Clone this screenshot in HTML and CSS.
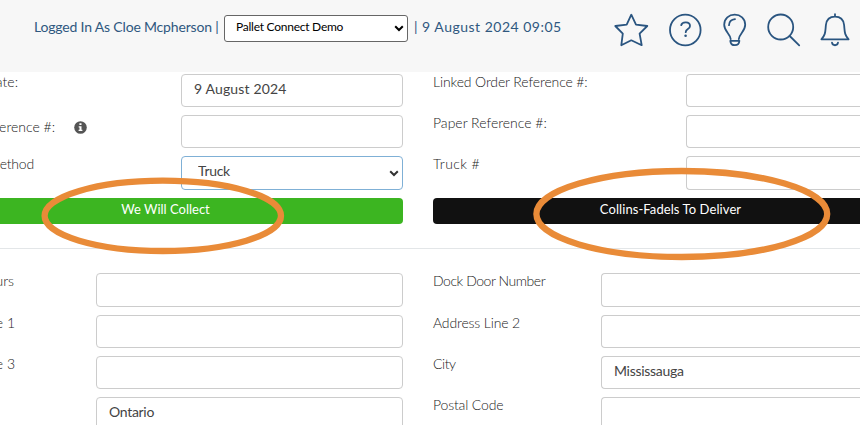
FILE: index.html
```
<!DOCTYPE html>
<html lang="en">
<head>
    <meta charset="UTF-8">
    <meta name="viewport" content="width=device-width, initial-scale=1.0">
    <title>Pallet Connect</title>
    <link rel="stylesheet" href="styles.css">
</head>
<body>

    <header class="topbar">
        <span class="user">Logged In As Cloe Mcpherson |</span>
        <div class="select-wrap site">
            <select class="site-select"><option>Pallet Connect Demo</option></select>
            <svg class="caret" width="10" height="7" viewBox="0 0 10 7"><path d="M1.2 1.2L5 5L8.8 1.2"/></svg>
        </div>
        <span class="clock">| 9 August 2024 09:05</span>
        <nav class="icons">
            <svg width="36" height="34" viewBox="0 0 36 34"><path d="M17.3 1.7L22 11.7L33.3 13L25.6 20.6L27.7 32.2L17.3 27.3L7.3 32.2L8.8 20.6L1.3 13L12.7 11.7Z"/></svg>
            <svg width="34" height="34" viewBox="0 0 34 34"><circle cx="17.3" cy="17" r="15.3"/><path d="M13.2 12.2C14 8.4 22 8.2 22 12.9C22 16.4 17.7 15.6 17.7 19.2"/><circle class="dot" cx="17.6" cy="22.8" r="1.3"/></svg>
            <svg width="27" height="34" viewBox="0 0 27 34"><path d="M10.7 26.2C10.2 20.5 4.2 18.4 4.2 11.8C4.2 5.6 9 1.7 14.7 1.7C20.4 1.7 25.2 5.6 25.2 11.8C25.2 18.4 19.3 20.5 18.8 26.2M9 12.2C9.2 8.8 11.5 6.6 15 6.2M10.3 27.8H19.4C19.2 31 17.6 32.2 14.9 32.2C12.2 32.2 10.6 31 10.3 27.8Z"/></svg>
            <svg width="36" height="34" viewBox="0 0 36 34"><circle cx="15.7" cy="14" r="12.5"/><path d="M24.7 23L34.2 32.3"/></svg>
            <svg width="34" height="34" viewBox="0 0 34 34"><path d="M16 1.2V3.6M2.4 26.3C6.8 21.3 6.2 18.8 6.9 12C7.5 6.3 11 3.6 16 3.6C21 3.6 24.5 6.3 25.1 12C25.8 18.8 25.2 21.3 29.6 26.3ZM13 29.7C13.5 33.1 18.5 33.1 19 29.7"/></svg>
        </nav>
    </header>

    <form class="order">
        <section class="columns">
            <div class="col left">
                <div class="row">
                    <label class="label date-label">Date:</label>
                    <input class="field spaced" type="text" value="9 August 2024">
                </div>
                <div class="row">
                    <label class="label ref-label">Reference #:</label>
                    <svg class="info" width="13" height="13" viewBox="0 0 13 13"><circle cx="6.5" cy="6.5" r="6.3"/><path d="M5.4 2.3H7.5V4.1H5.4ZM4.7 5.2H7.5V8.8H8.4V10.1H4.6V8.8H5.5V6.4H4.7Z"/></svg>
                    <input class="field" type="text">
                </div>
                <div class="row tall">
                    <label class="label method-label">Method</label>
                    <div class="select-wrap method">
                        <select class="field active"><option>Truck</option></select>
                        <svg class="caret" width="10" height="7" viewBox="0 0 10 7"><path d="M1.2 1.2L5 5L8.8 1.2"/></svg>
                    </div>
                </div>
                <button class="btn collect" type="button"><span>We Will Collect</span></button>
            </div>
            <div class="col right">
                <div class="row">
                    <label class="label linked-label">Linked Order Reference #:</label>
                    <input class="field" type="text">
                </div>
                <div class="row">
                    <label class="label">Paper Reference #:</label>
                    <input class="field" type="text">
                </div>
                <div class="row tall">
                    <label class="label truck-label">Truck #</label>
                    <input class="field" type="text">
                </div>
                <button class="btn deliver" type="button"><span>Collins-Fadels To Deliver</span></button>
            </div>
        </section>

        <section class="columns address">
            <div class="col left">
                <div class="row tall">
                    <label class="label hours-label">Hours</label>
                    <input class="field" type="text">
                </div>
                <div class="row">
                    <label class="label line-label">Line 1</label>
                    <input class="field" type="text">
                </div>
                <div class="row">
                    <label class="label line-label">Line 3</label>
                    <input class="field" type="text">
                </div>
                <div class="row">
                    <input class="field" type="text" value="Ontario">
                </div>
            </div>
            <div class="col right">
                <div class="row tall">
                    <label class="label dock-label">Dock Door Number</label>
                    <input class="field" type="text">
                </div>
                <div class="row">
                    <label class="label address-label">Address Line 2</label>
                    <input class="field" type="text">
                </div>
                <div class="row">
                    <label class="label dock-label">City</label>
                    <input class="field" type="text" value="Mississauga">
                </div>
                <div class="row">
                    <label class="label address-label">Postal Code</label>
                    <input class="field" type="text">
                </div>
            </div>
        </section>
    </form>

    <!-- Highlight rings over the two buttons -->
    <svg class="rings" width="860" height="425" viewBox="0 0 860 425">
        <ellipse cx="162.8" cy="215.8" rx="118.2" ry="35.2"/>
        <ellipse cx="681.8" cy="214" rx="145.4" ry="43"/>
    </svg>

</body>
</html>
```
FILE: styles.css
```
* {
    box-sizing: border-box;
}
body {
    margin: 0;
    width: 860px;
    height: 425px;
    overflow: hidden;
    position: relative;
    background: #fff;
    font-family: Lato, "Liberation Sans", sans-serif;
    font-size: 14px;
    color: #333;
}
.topbar {
    display: flex;
    align-items: flex-start;
    height: 72px;
    background: #f7f7f7;
    color: #2f587f;
}
.user,
.clock {
    line-height: 20px;
    padding-top: 17px;
    white-space: nowrap;
}
.user {
    width: 224px;
    padding-left: 34px;
    letter-spacing: -0.18px;
}
.clock {
    width: 206px;
    padding-left: 6px;
    letter-spacing: 0.5px;
}
.select-wrap {
    position: relative;
    flex: none;
}
.site {
    width: 184px;
    margin-top: 15px;
}
.site-select {
    display: block;
    width: 100%;
    height: 27px;
    padding: 0 11px 4px;
    appearance: none;
    border: 1px solid #666;
    border-radius: 3px;
    background: #fff;
    font-family: inherit;
    font-size: 12px;
    letter-spacing: -0.25px;
    color: #000;
}
.caret {
    position: absolute;
    right: 4px;
    top: 10px;
    fill: none;
    stroke: #000;
    stroke-width: 2;
}
.icons {
    display: flex;
    gap: 18px;
    padding-top: 13px;
}
.icons svg {
    flex: none;
    overflow: visible;
    fill: none;
    stroke: #2a5580;
    stroke-width: 1.8;
    stroke-linejoin: round;
    stroke-linecap: round;
}
.icons .dot {
    fill: #2a5580;
    stroke: none;
}
.columns {
    display: flex;
    gap: 30px;
    padding-top: 2px;
    height: 177px;
    border-bottom: 1px solid #e3e6e8;
}
.col {
    display: flex;
    flex-direction: column;
    gap: 8px;
    flex: none;
}
.left {
    width: 403px;
}
.right {
    width: 427px;
}
.row {
    display: flex;
    justify-content: flex-end;
    height: 33px;
    flex: none;
}
.row.tall {
    height: 34px;
}
.label {
    line-height: 16px;
    font-weight: 300;
    color: #222;
    white-space: nowrap;
}
/* left-hand captions run off the edge of the page */
.left .label {
    display: flex;
    justify-content: flex-end;
    overflow: hidden;
    margin-right: auto;
}
.right .label {
    margin-right: auto;
}
.date-label {
    width: 18px;
}
.left .ref-label {
    width: 55px;
    padding-top: 4px;
    margin-right: 0;
}
.method-label {
    width: 34px;
    letter-spacing: -0.2px;
}
.hours-label {
    width: 14px;
}
.line-label {
    width: 15px;
}
.linked-label {
    letter-spacing: -0.12px;
}
.truck-label {
    letter-spacing: 0.4px;
}
.dock-label {
    letter-spacing: -0.45px;
}
.address-label {
    letter-spacing: -0.15px;
}
.info {
    margin: 6px auto 0 19px;
    fill: #555;
}
.info path {
    fill: #fff;
}
.field {
    display: block;
    width: 222px;
    height: 100%;
    flex: none;
    padding: 0 12px 4px;
    border: 1px solid #ccc;
    border-radius: 4px;
    background: #fff;
    font-family: inherit;
    font-size: 14px;
    letter-spacing: -0.3px;
    color: #444;
    outline: none;
}
.field.spaced {
    letter-spacing: 0.15px;
}
.method .field {
    padding: 0 16px 5px;
    appearance: none;
}
.field.active {
    border-color: #7fb0d6;
}
.method .caret {
    top: 14px;
    stroke: #333;
}
/* these fields continue past the right edge, so no closing border */
.right .field {
    width: 174px;
    border-right: 0;
    border-radius: 4px 0 0 4px;
}
.address .left .field {
    width: 307px;
}
.address .right .field {
    width: 259px;
}
.btn {
    height: 26px;
    padding: 0 0 4px;
    border: 0;
    font-family: inherit;
    font-size: 13px;
    color: #fff;
}
.collect {
    padding-right: 72px;
    border-radius: 0 4px 4px 0;
    background: #3cb521;
}
.deliver {
    padding-left: 48px;
    border-radius: 4px 0 0 4px;
    background: #111;
    letter-spacing: 0.08px;
}
.address {
    padding-top: 24px;
    border: 0;
}
.rings {
    position: absolute;
    left: 0;
    top: 0;
    fill: none;
    stroke: #e98b38;
    stroke-width: 6.3;
    pointer-events: none;
}
```
